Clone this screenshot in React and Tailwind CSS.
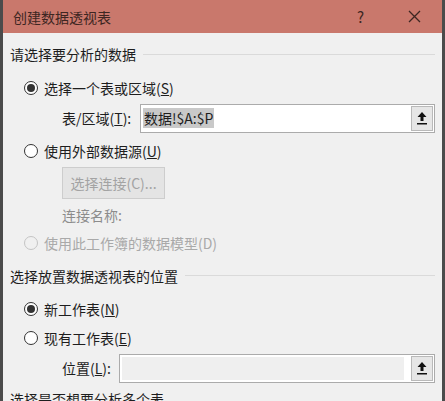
import React from "react";

const font = { fontFamily: '"Noto Sans CJK SC", "Noto Sans", sans-serif' };

function Radio({ checked, disabled }) {
  return (
    <span
      className={
        "flex h-[14px] w-[14px] shrink-0 items-center justify-center rounded-full border " +
        (disabled ? "border-[#c4c4c4] bg-[#f0f0f0]" : "border-[#333333] bg-white")
      }
    >
      {checked && <span className="h-[8px] w-[8px] rounded-full bg-[#333333]" />}
    </span>
  );
}

function UploadIcon() {
  return (
    <svg width="12" height="14" viewBox="0 0 12 14">
      <path d="M6 1 L1.5 6 H4.5 V10 H7.5 V6 H10.5 Z" fill="#111" />
      <rect x="1" y="12" width="10" height="1.5" fill="#111" />
    </svg>
  );
}

function RefInput({ disabled, children, left }) {
  return (
    <div
      className={
        "flex h-[29px] flex-1 border border-[#ababab] " + (disabled ? "bg-white" : "bg-white")
      }
    >
      <div
        className={
          "flex flex-1 items-center " +
          (disabled ? "my-[2px] ml-[2px] mr-[6px] bg-[#efefef]" : "pl-[2px]")
        }
      >
        {children}
      </div>
      <div className="m-[1px] flex w-[22px] items-center justify-center border border-[#b9b9b9] bg-[#e6e6e6]">
        <UploadIcon />
      </div>
    </div>
  );
}

function SectionHeader({ text, className }) {
  return (
    <div className={"flex items-center " + className}>
      <span className="text-[14px] leading-none text-[#1e1e1e]">{text}</span>
      <div className="ml-[7px] h-px flex-1 bg-[#dadada]" />
    </div>
  );
}

export default function App() {
  return (
    <div
      className="flex h-[401px] w-[445px] overflow-hidden bg-[#4b4b4b] pl-[3px] pr-[3px]"
      style={font}
    >
      <div className="flex flex-1 flex-col bg-[#f0f0f0]">
        {/* Title bar */}
        <div className="flex h-[33px] shrink-0 items-center bg-[#c9786c] pl-[10px]">
          <span className="text-[14px] leading-none text-[#3d2622]">创建数据透视表</span>
          <div className="flex-1" />
          <span className="mr-[44px] text-[15px] leading-none text-[#3d2622]">?</span>
          <svg width="13" height="13" viewBox="0 0 13 13" className="mr-[21px]">
            <path d="M1 1 L12 12 M12 1 L1 12" stroke="#3d2622" strokeWidth="1.3" />
          </svg>
        </div>

        <div className="flex flex-col pl-[7px] pr-[7px] text-[14px] leading-none text-[#1e1e1e]">
          <SectionHeader text="请选择要分析的数据" className="h-[42px]" />

          <div className="flex h-[26px] items-center gap-[6px] pl-[14px]">
            <Radio checked />
            <span>
              选择一个表或区域(<span className="underline">S</span>)
            </span>
          </div>

          <div className="flex h-[34px] items-center pl-[52px]">
            <span className="w-[78px]">
              表/区域(<span className="underline">T</span>):
            </span>
            <RefInput>
              <span className="flex h-[20px] items-center bg-[#c9c9c9] px-[1px]">数据!$A:$P</span>
            </RefInput>
          </div>

          <div className="flex h-[32px] items-center gap-[6px] pl-[14px]">
            <Radio />
            <span>
              使用外部数据源(<span className="underline">U</span>)
            </span>
          </div>

          <div className="flex h-[32px] items-center pl-[52px]">
            <div className="flex h-[32px] w-[103px] items-center justify-center border border-[#cdcdcd] bg-[#e4e4e4] text-[#a3a3a3]">
              选择连接(C)...
            </div>
          </div>

          <div className="flex h-[32px] items-center pl-[52px] text-[#8c8c8c]">连接名称:</div>

          <div className="flex h-[24px] items-center gap-[6px] pl-[14px] text-[#a9a9a9]">
            <Radio disabled />
            <span>使用此工作簿的数据模型(D)</span>
          </div>

          <SectionHeader text="选择放置数据透视表的位置" className="h-[41px]" />

          <div className="flex h-[26px] items-center gap-[6px] pl-[14px]">
            <Radio checked />
            <span>
              新工作表(<span className="underline">N</span>)
            </span>
          </div>

          <div className="flex h-[32px] items-center gap-[6px] pl-[14px]">
            <Radio />
            <span>
              现有工作表(<span className="underline">E</span>)
            </span>
          </div>

          <div className="flex h-[28px] items-center pl-[52px]">
            <span className="w-[57px]">
              位置(<span className="underline">L</span>):
            </span>
            <RefInput disabled />
          </div>

          <div className="flex h-[34px] items-center">选择是否想要分析多个表</div>
        </div>
      </div>
    </div>
  );
}
